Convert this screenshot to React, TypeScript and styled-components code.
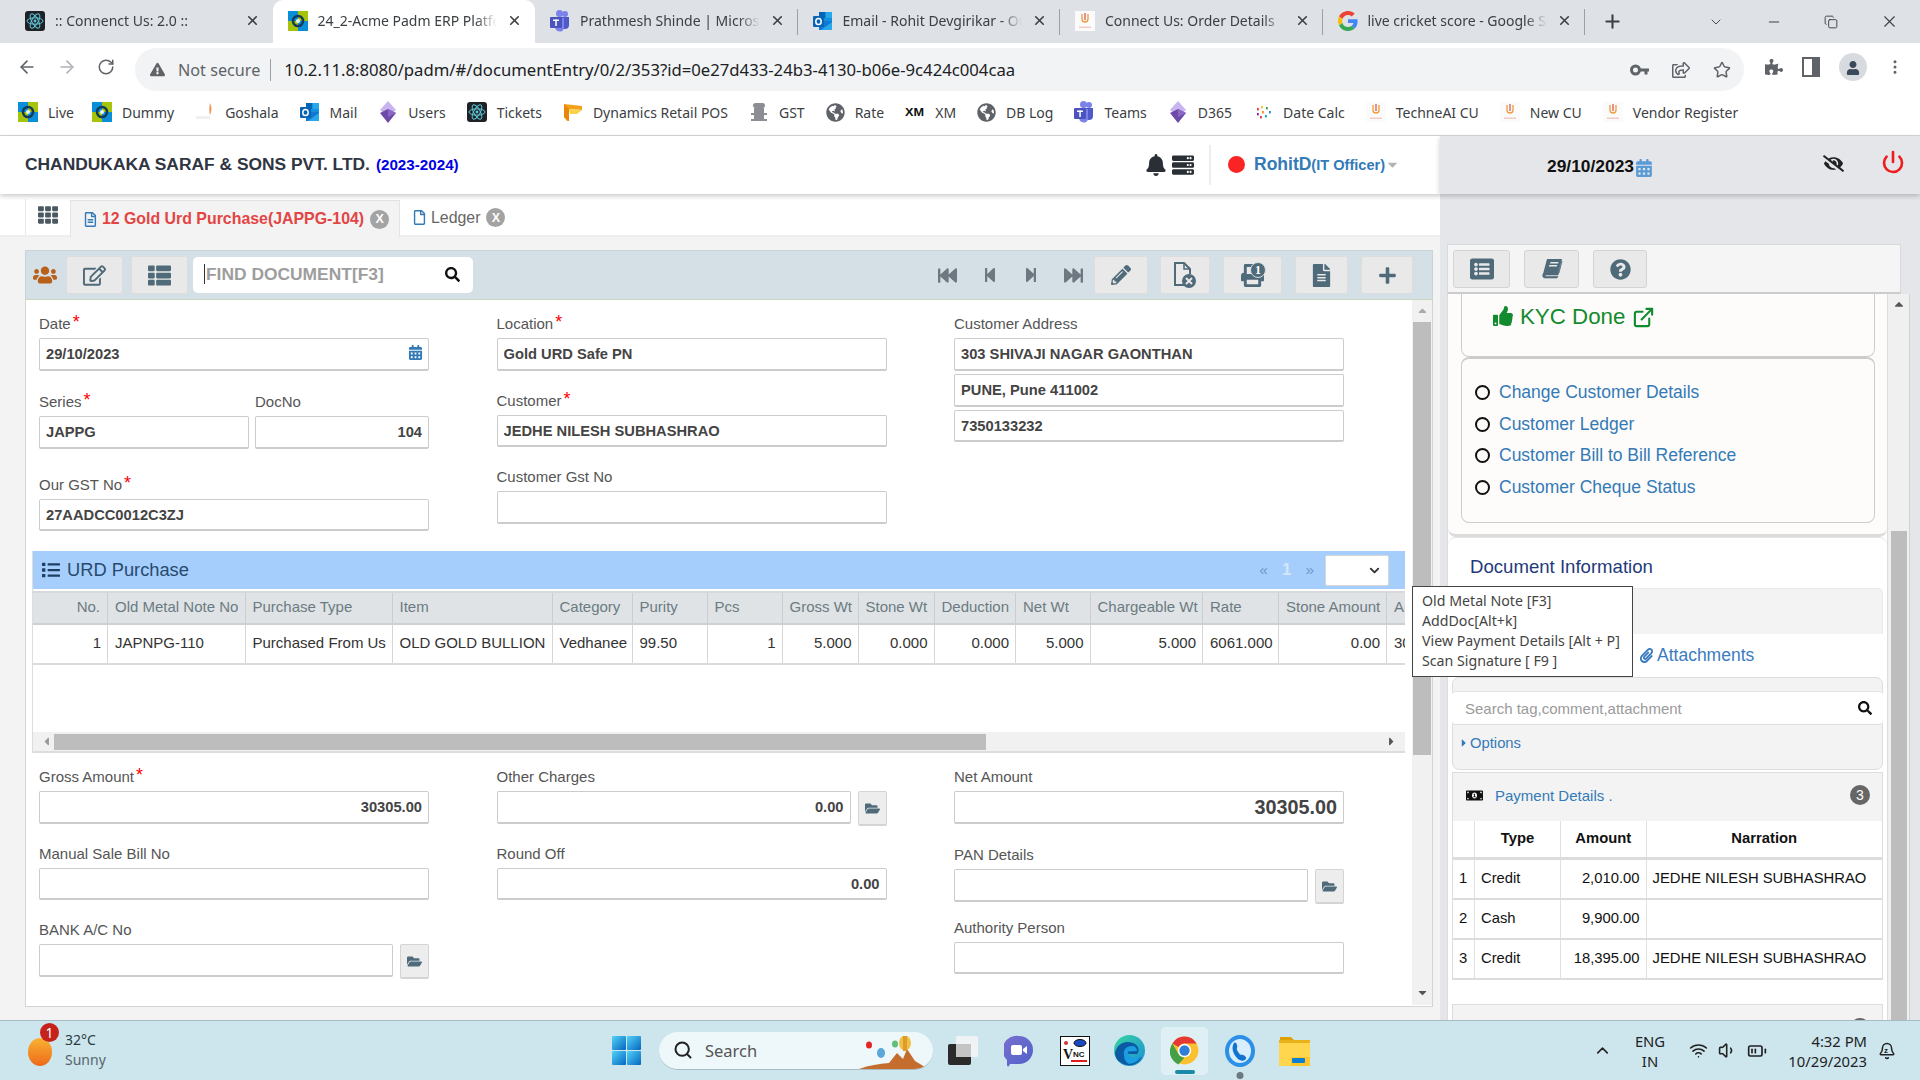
import React from 'react';
import styled, { createGlobalStyle } from 'styled-components';
import { ArrowLeft, ArrowRight, RotateCw, Star, Plus, Minus, X, ChevronDown, ChevronUp, MoreVertical, Copy, Power, ExternalLink, Search as LSearch, Wifi, Volume1, BatteryMedium, Bell } from 'lucide-react';
import { FaUsers, FaRegEdit, FaThList, FaFastBackward, FaStepBackward, FaStepForward, FaFastForward, FaPencilAlt, FaPrint, FaFileAlt, FaPlus, FaSearch, FaBell, FaThumbsUp, FaTh, FaRegFileAlt, FaCalendarAlt, FaFolderOpen, FaPaperclip, FaMoneyBillAlt, FaQuestionCircle, FaListAlt, FaEyeSlash, FaServer, FaCaretRight, FaCaretDown, FaPuzzlePiece, FaUser, FaGlobeAmericas, FaList, FaCaretUp, FaCaretLeft, FaRegFile, FaExclamationTriangle, FaRegShareSquare } from 'react-icons/fa';

const Global = createGlobalStyle`
  html, body { margin: 0; padding: 0; width: 1920px; height: 1080px; overflow: hidden; background: #fff; }
  * { box-sizing: border-box; }
  #root { width: 1920px; height: 1080px; }
`;

const ARIAL = `"Liberation Sans", Arial, sans-serif`;
const UI = `"Noto Sans", "Open Sans", sans-serif`;

const Shell = styled.div`
  position: relative; width: 1920px; height: 1080px; display: flex; flex-direction: column;
  font-family: ${ARIAL}; overflow: hidden;
`;

/* ---------- favicons ---------- */
const AcmeIco = () => (
  <svg width="20" height="20" viewBox="0 0 20 20"><rect width="10" height="10" fill="#0a8ed8"/><rect x="10" width="10" height="10" fill="#a6c40a"/><rect y="10" width="10" height="10" fill="#a6c40a"/><rect x="10" y="10" width="10" height="10" fill="#0a8ed8"/><circle cx="10" cy="10" r="5" fill="none" stroke="#123a5c" strokeWidth="2.6"/><circle cx="10" cy="10" r="2" fill="#e8f0f4"/></svg>
);
const ReactIco = () => (
  <svg width="20" height="20" viewBox="0 0 20 20"><rect width="20" height="20" rx="3" fill="#1e2227"/><g fill="none" stroke="#61c7d8" strokeWidth="1"><ellipse cx="10" cy="10" rx="8" ry="3.2"/><ellipse cx="10" cy="10" rx="8" ry="3.2" transform="rotate(60 10 10)"/><ellipse cx="10" cy="10" rx="8" ry="3.2" transform="rotate(120 10 10)"/></g><circle cx="10" cy="10" r="1.4" fill="#61c7d8"/></svg>
);
const TeamsIco = () => (
  <svg width="20" height="22" viewBox="0 0 20 22"><circle cx="15" cy="4" r="3" fill="#7b83eb"/><circle cx="9.5" cy="3.5" r="3.5" fill="#7b83eb"/><path d="M11 7h8v8a4 4 0 0 1-8 0z" fill="#5059c9"/><path d="M5 8h9v10a4 4 0 0 1-4.500 3.500A5 5 0 0 1 5 17z" fill="#7b83eb"/><rect y="7" width="12" height="11" rx="1" fill="#4b53bc"/><rect x="3" y="9.500" width="6" height="1.500" fill="#fff"/><rect x="5.300" y="9.500" width="1.500" height="6.500" fill="#fff"/></svg>
);
const OutlookIco = () => (
  <svg width="20" height="20" viewBox="0 0 20 20"><rect x="6" y="1" width="13" height="18" rx="1" fill="#1490df"/><rect x="6" y="1" width="6.500" height="6" fill="#0364b8"/><rect x="12.500" y="1" width="6.500" height="6" fill="#28a8ea"/><path d="M6 10l13 0v9H6z" fill="#0f78d4"/><path d="M8 19l11-8v8z" fill="#28a8ea"/><rect y="5" width="11" height="11" rx="1" fill="#0a64b4"/><ellipse cx="5.500" cy="10.500" rx="2.700" ry="3.100" fill="none" stroke="#fff" strokeWidth="1.500"/></svg>
);
const ConnectIco = () => (
  <svg width="20" height="20" viewBox="0 0 20 20"><rect width="20" height="20" fill="#fbfbfb"/><path d="M7 3v5a3 3 0 0 0 6 0V3" fill="none" stroke="#ef9a3c" strokeWidth="1.300"/><path d="M10 2v7" stroke="#e2574c" strokeWidth="1.300"/><rect x="4" y="15.500" width="12" height="1.500" fill="#f4cbc3"/></svg>
);
const GoogleIco = () => (
  <svg width="20" height="20" viewBox="0 0 48 48"><path fill="#EA4335" d="M24 9.500c3.540 0 6.710 1.220 9.210 3.600l6.850-6.850C35.900 2.380 30.470 0 24 0 14.620 0 6.510 5.380 2.560 13.220l7.980 6.190C12.430 13.720 17.740 9.500 24 9.500z"/><path fill="#4285F4" d="M46.980 24.550c0-1.570-.15-3.090-.38-4.550H24v9.020h12.940c-.58 2.960-2.260 5.480-4.780 7.180l7.730 6c4.510-4.180 7.090-10.360 7.090-17.650z"/><path fill="#FBBC05" d="M10.530 28.590c-.48-1.450-.76-2.990-.76-4.590s.27-3.140.76-4.590l-7.980-6.190C.92 16.460 0 20.120 0 24c0 3.880.92 7.540 2.560 10.780l7.970-6.190z"/><path fill="#34A853" d="M24 48c6.480 0 11.930-2.130 15.890-5.810l-7.730-6c-2.150 1.450-4.920 2.300-8.160 2.300-6.260 0-11.570-4.220-13.470-9.910l-7.980 6.190C6.510 42.620 14.620 48 24 48z"/></svg>
);
const GoshalaIco = () => (
  <svg width="20" height="20" viewBox="0 0 20 20"><path d="M15 1c2 4 2 8 0 12-1-3-1-8 0-12z" fill="#ef9a5c"/><rect x="1" y="14" width="14" height="3" fill="#f0f0f0"/></svg>
);
const DiamondIco = () => (
  <svg width="20" height="22" viewBox="0 0 20 22"><path d="M10 0l8 9-8 6-8-6z" fill="#c8b4ee"/><path d="M2 12l8-4 8 4-8 10z" fill="#6d4aa8"/><path d="M10 8l8 4-8 4z" fill="#8b67c6"/></svg>
);
const DynamicsIco = () => (
  <svg width="20" height="20" viewBox="0 0 20 20"><path d="M1 2l18 2v4L6 7v12H4L1 15z" fill="#f3a11c"/><path d="M6 7l13 1-5 4H7z" fill="#f9d24a"/><path d="M1 2l5 5v12l-5-4z" fill="#e8850a"/></svg>
);
const EmblemIco = () => (
  <svg width="20" height="20" viewBox="0 0 20 20"><g fill="#8b8f94"><rect x="4" y="1" width="12" height="5" rx="2.500"/><rect x="5" y="6" width="10" height="5"/><rect x="2" y="11" width="16" height="2"/><rect x="5" y="13" width="10" height="4"/><rect x="2" y="17" width="16" height="2"/></g></svg>
);
const XmIco = () => (
  <svg width="20" height="20" viewBox="0 0 20 20"><text x="0" y="14" fontFamily="Liberation Sans" fontWeight="700" fontSize="11" textLength="19" lengthAdjust="spacingAndGlyphs" fill="#111">XM</text></svg>
);
const DotsIco = () => (
  <svg width="20" height="20" viewBox="0 0 20 20">{[['#e53935', 4, 6], ['#fbc02d', 8, 4], ['#43a047', 13, 5], ['#1e88e5', 16, 9], ['#8e24aa', 4, 11], ['#fb8c00', 9, 9], ['#00acc1', 12, 13], ['#e53935', 7, 14]].map(([c, x, y], i) => <rect key={i} x={x as number} y={y as number} width="1.800" height="2.400" fill={c as string}/>)}</svg>
);
const GlobeIco = () => <FaGlobeAmericas size={19} color="#5f6368" />;
const KeyIco = () => (
  <svg width="19" height="12" viewBox="0 0 19 12"><circle cx="5.500" cy="6" r="4" fill="none" stroke="#5f6368" strokeWidth="3"/><path d="M9 4.500h10v3h-1.500v3h-3v-3H9z" fill="#5f6368"/></svg>
);
const BookIco = () => (
  <svg width="22" height="22" viewBox="0 0 22 22"><path d="M6 1h15l-4 15H2z" fill="#4f6a78"/><path d="M2 16c-1 2 0 4 2 4h12l1-1.500H5c-1 0-1-1.500 0-1.500h12l4-14-3 12z" fill="#4f6a78" stroke="#4f6a78" strokeWidth=".6"/><rect x="8.500" y="4" width="8" height="1.500" fill="#e9e9e9" transform="skewX(-14) translate(2 0)"/><rect x="8" y="7" width="8" height="1.500" fill="#e9e9e9" transform="skewX(-14) translate(2 0)"/></svg>
);
const SideIco = () => (
  <svg width="18" height="20" viewBox="0 0 18 20"><rect x="1" y="1" width="16" height="18" fill="none" stroke="#5f6368" strokeWidth="2"/><rect x="10" y="1" width="7" height="18" fill="#5f6368"/></svg>
);
const FileX = () => (
  <svg width="26" height="28" viewBox="0 0 26 28"><path d="M13 24H3V2h9l6 6v5" fill="none" stroke="#4f6a78" strokeWidth="2"/><path d="M12 2v6h6" fill="none" stroke="#4f6a78" strokeWidth="1.500"/><circle cx="17" cy="20" r="7" fill="#4f6a78"/><path d="M14 17l6 6M20 17l-6 6" stroke="#e9e9e9" strokeWidth="2"/></svg>
);

/* ---------- browser ---------- */
const TabBar = styled.div`
  height: 43px; background: #dee1e6; display: flex; padding-left: 10px; align-items: stretch; flex: none;
`;
const Tab = styled.div<{ $active?: boolean; $sep?: boolean }>`
  width: 262.500px; flex: none; display: flex; align-items: center; padding: 0 13px 2px 15px; gap: 10px;
  font: 14px ${UI}; color: #3c4043; position: relative;
  background: ${p => (p.$active ? '#fff' : 'transparent')};
  border-radius: ${p => (p.$active ? '10px 10px 0 0' : '0')};
  ${p => p.$sep ? `&::after { content: ''; position: absolute; right: 0; top: 9px; bottom: 8px; width: 1px; background: #9aa0a6; }` : ''}
`;
const TabTitle = styled.span`
  flex: 1; overflow: hidden; white-space: nowrap; min-width: 0;
  -webkit-mask-image: linear-gradient(to right, #000 88%, transparent);
  mask-image: linear-gradient(to right, #000 88%, transparent);
`;
const WinControls = styled.div`
  display: flex; align-items: center; color: #3c4043; margin-left: auto; gap: 42px; padding-right: 21px;
`;
const NewTab = styled.div`
  display: flex; align-items: center; margin-left: 17px; color: #3c4043;
`;
const AddressRow = styled.div`
  height: 48px; flex: none; display: flex; align-items: center; padding: 0 0 0 17px; color: #5f6368; background: #fff;
`;
const NavIcons = styled.div`
  display: flex; gap: 20px; align-items: center; width: 118px;
`;
const Omni = styled.div`
  width: 1609px; height: 43px; margin-top: 5px; flex: none; background: #f1f3f4; border-radius: 22px; display: flex; align-items: center;
  padding: 0 13px 0 15px; font: 15.500px ${UI}; color: #5f6368;
`;
const NotSecure = styled.span`
  margin-left: 13px; padding-right: 10px; border-right: 1px solid #9aa0a6; line-height: 22px; font-size: 16.200px;
`;
const Url = styled.span`
  margin-left: 13px; color: #202124; font-size: 16.700px; white-space: nowrap; flex: 1;
`;
const OmniIcons = styled.div`
  display: flex; align-items: center; gap: 23px;
`;
const ExtIcons = styled.div`
  display: flex; align-items: center; margin-left: 21px; gap: 19px;
`;
const Avatar = styled.div`
  width: 28px; height: 28px; border-radius: 50%; background: #d7dbe0; display: flex; align-items: flex-end; justify-content: center; padding-bottom: 6px;
`;
const BookBar = styled.div`
  height: 45px; flex: none; border-bottom: 1px solid #d6d7d9; display: flex; align-items: center; padding: 0 0 2px 18px; gap: 21px;
  background: #fff; font: 14px ${UI}; color: #3c4043;
`;
const Book = styled.div`
  display: flex; align-items: center; gap: 10px; white-space: nowrap;
  &:first-child { margin-right: -3px; }
`;

/* ---------- app layout ---------- */
const AppArea = styled.div`
  flex: 1; min-height: 0; display: grid; grid-template-columns: 1440px 480px;
`;
const LeftCol = styled.div`
  display: flex; flex-direction: column; min-height: 0;
`;
const TopBar = styled.div`
  height: 58px; flex: none; background: #fff; display: flex; align-items: center; padding: 0 0 1px 25px; box-shadow: 0 2px 5px rgba(0,0,0,.22); position: relative; z-index: 2;
`;
const Company = styled.div`
  font: bold 17.400px ${ARIAL}; color: #2f3542; white-space: nowrap; flex: 1;
`;
const Fy = styled.span`
  font-size: 15.200px; color: #0000e6; margin-left: 6px;
`;
const TopIcons = styled.div`
  display: flex; align-items: center; gap: 5px; color: #2a2f36; padding-right: 15px; height: 40px; border-right: 2px solid #eceeef;
`;
const UserBox = styled.div`
  display: flex; align-items: center; padding-left: 17px; width: 229px; white-space: nowrap; color: #337ab7; font: bold 17.500px ${ARIAL};
`;
const RedDot = styled.span`
  width: 17px; height: 17px; border-radius: 50%; background: #fb2424; margin-right: 9px;
`;
const Role = styled.span`
  font-size: 14.600px;
`;
const TabStrip = styled.div`
  height: 43px; flex: none; background: #fff; border-bottom: 2px solid #eee; display: flex; align-items: flex-end; padding-left: 25px;
`;
const GridCell = styled.div`
  width: 45px; height: 36px; border-left: 1px solid #e8e8e8; display: flex; justify-content: center; padding-top: 6px; color: #4b5a62;
`;
const DocTab = styled.div<{ $active?: boolean }>`
  ${p => (p.$active ? 'width: 330px; flex: none;' : '')}
  height: ${p => (p.$active ? '37px' : '35px')}; display: flex; align-items: center; gap: 4px;
  padding: 0 ${p => (p.$active ? '10px' : '0')} 0 ${p => (p.$active ? '12px' : '12px')}; margin-bottom: ${p => (p.$active ? '-2px' : '0')};
  background: ${p => (p.$active ? '#f3f3f3' : 'transparent')};
  border: ${p => (p.$active ? '1px solid #e4e4e4' : 'none')}; border-bottom: none;
  font: ${p => (p.$active ? 'bold' : 'normal')} 15.900px ${ARIAL};
  color: ${p => (p.$active ? '#e34545' : '#666')}; white-space: nowrap;
  svg { color: #337ab7; }
`;
const TabClose = styled.span`
  width: 19px; height: 19px; border-radius: 50%; background: #a3a3a3; color: #fff; display: inline-flex; align-items: center; justify-content: center;
  font: bold 12.500px ${ARIAL}; margin-left: 2px;
`;
const Work = styled.div`
  flex: 1; min-height: 0; background: #f3f3f3; padding: 13px 7px 0 25px;
`;
const ToolBar = styled.div`
  height: 50px; background: #d5e0e6; border: 1px solid #c6d3d9; border-bottom-color: #ccd6c0; display: flex; align-items: center; padding: 0 19px 0 7px;
  color: #4f6a78;
`;
const ToolBtn = styled.div<{ $w: number; $ml?: number }>`
  width: ${p => p.$w}px; height: 38px; flex: none; margin-left: ${p => p.$ml ?? 0}px; background: #e9e9e9; border: 1px solid #ddd; border-radius: 3px;
  display: flex; align-items: center; justify-content: center; color: #4f6a78; position: relative;
`;
const FindBox = styled.div`
  width: 280px; height: 36px; margin-left: 5px; background: #fff; border-radius: 5px; display: flex; align-items: center; justify-content: space-between;
  padding: 0 13px 2px 11px; font: bold 17.400px ${ARIAL}; color: #9d9d9d; white-space: nowrap;
  svg { color: #111; }
`;
const Caret = styled.span`
  display: inline-block; vertical-align: middle; width: 1px; height: 20px; background: #333; margin: -2px 1px 0 0;
`;
const Pager = styled.div`
  margin-left: auto; display: flex; align-items: center; gap: 25px; color: #6d7880; margin-right: 11px;
`;
const PrintBadge = styled.span`
  position: absolute; left: 26px; top: 5px; width: 16px; height: 16px; border-radius: 50%; background: #4f6a78; border: 1px solid #d5e0e6; color: #fff;
  font: bold 12px "Liberation Serif", serif; display: flex; align-items: center; justify-content: center;
`;
const FormFrame = styled.div`
  height: 707px; background: #fff; border: 1px solid #d4d4d4; border-top: none; display: flex;
`;
const FormScroll = styled.div`
  flex: 1; min-width: 0; overflow: hidden; margin-bottom: 4px;
`;
const VTrack = styled.div`
  width: 20px; flex: none; background: #f1f1f1; display: flex; flex-direction: column; align-items: center; justify-content: space-between; color: #7f7f7f; position: relative; padding: 4px 0 6px;
  margin-bottom: 1px;
`;
const VThumb = styled.div<{ $top: number; $h: number }>`
  position: absolute; left: 1px; right: 1px; top: ${p => p.$top}px; height: ${p => p.$h}px; background: #bdbdbd;
`;
const FormGrid = styled.div<{ $h: number }>`
  display: grid; grid-template-columns: 390px 390px 390px; column-gap: 67.500px; padding: 14px 0 0 13px; height: ${p => p.$h}px;
`;
const FormCol = styled.div`
  display: flex; flex-direction: column; align-items: stretch;
`;
const Label = styled.div<{ $mt?: number }>`
  height: 20px; line-height: 20px; margin: ${p => p.$mt ?? 0}px 0 4px; font-size: 15px; color: #555; white-space: nowrap; display: flex; flex: none;
`;
const Req = styled.span`
  color: #f00; font-size: 18px; line-height: 16px; margin-left: 2px;
`;
const Input = styled.input.attrs({ readOnly: true })<{ $right?: boolean; $big?: boolean; $h?: number }>`
  width: 100%; min-width: 0; height: ${p => p.$h ?? 33}px; flex: none; border: 1px solid #ccc; border-bottom-width: 2px; border-radius: 2px; background: #fff; padding: 0 6px;
  font: bold ${p => (p.$big ? '19.800px' : '14.700px')} ${ARIAL}; color: #444; text-align: ${p => (p.$right ? 'right' : 'left')}; outline: none; display: block;
`;
const InputIcon = styled.div`
  position: relative; display: flex;
  svg { position: absolute; right: 6px; top: 7px; color: #337ab7; }
`;
const Row = styled.div<{ $gap?: number }>`
  display: flex; gap: ${p => p.$gap ?? 7}px; align-items: flex-start; flex: none;
  > input { flex: 1 1 0; }
`;
const SmallField = styled.div<{ $w: number }>`
  width: ${p => p.$w}px; flex: none;
`;
const FolderBtn = styled.div`
  width: 29px; height: 35px; flex: none; background: #ededed; border: 1px solid #d4d4d4; border-bottom-width: 2px; border-radius: 2px; display: flex; align-items: center; justify-content: center; color: #4f6a78;
`;
const Stack = styled.div<{ $gap: number }>`
  display: flex; flex-direction: column; gap: ${p => p.$gap}px;
`;

/* ---------- grid ---------- */
const GridBlock = styled.div`
  margin-left: 6px; width: 1373px; height: 202px; border-left: 1px solid #ddd; border-bottom: 2px solid #ddd; display: flex; flex-direction: column; overflow: hidden;
`;
const SectionBar = styled.div`
  height: 38px; flex: none; background: #a6cefc; display: flex; align-items: center; padding-left: 10px; gap: 7px; font-size: 18.300px; color: #264a6e; margin-left: -1px;
`;
const SectionPager = styled.div`
  margin-left: auto; display: flex; align-items: center; gap: 14px; font-size: 15.500px; color: #6f97c8; padding-right: 16px;
`;
const PageNo = styled.span`
  color: #d5e6fa; font-size: 17px; font-weight: 700;
`;
const MiniSelect = styled.div`
  width: 64px; height: 31px; margin-left: -3px; background: #fff; border: 1px solid #d8d8d8; border-radius: 2px; display: flex; align-items: center; justify-content: flex-end; padding-right: 6px; color: #333;
`;
const COLS = '75px 137.500px 147px 160px 80px 75px 75px 76px 76px 81.500px 74.500px 112.500px 76px 108px 60px';
const HeadRow = styled.div`
  display: grid; grid-template-columns: ${COLS}; height: 34px; margin-top: 2px; flex: none; background: #dfe3e5; border-top: 2px solid #d8d8d8; border-bottom: 2px solid #ccd0d2;
`;
const HeadCell = styled.div<{ $right?: boolean }>`
  padding: 0 7px; border-right: 1px solid #c8cdd0; font-size: 15px; line-height: 28px; color: #6b7b82; white-space: nowrap; overflow: hidden; text-align: ${p => (p.$right ? 'right' : 'left')};
`;
const BodyRow = styled.div`
  display: grid; grid-template-columns: ${COLS}; height: 40px; flex: none; border-bottom: 2px solid #d9dcdd;
`;
const BodyCell = styled.div<{ $right?: boolean }>`
  padding: 0 6px 0 7px; border-right: 1px solid #d6d6d6; font-size: 15px; line-height: 35px; color: #333; white-space: nowrap; overflow: hidden; text-align: ${p => (p.$right ? 'right' : 'left')};
`;
const HScroll = styled.div`
  margin-top: auto; height: 19px; flex: none; background: #f1f1f1; display: flex; align-items: center; color: #555; justify-content: space-between; padding: 0 7px; position: relative;
`;
const HThumb = styled.div`
  position: absolute; left: 21px; top: 2px; bottom: 1px; width: 932px; background: #bdbdbd;
`;

/* ---------- right column ---------- */
const RightCol = styled.div`
  background: #e4e6e9; display: flex; flex-direction: column; min-height: 0;
`;
const DateBar = styled.div`
  height: 58px; flex: none; background: #e4e6e9; display: flex; align-items: center; padding: 3px 0 0 107px; box-shadow: 0 2px 5px rgba(0,0,0,.22); position: relative; z-index: 2;
  font: bold 17.400px ${ARIAL}; color: #111;
`;
const DateCal = styled.span`
  color: #5b9bd5; display: flex; margin-left: 1px; margin-top: 3px;
`;
const EyeIcon = styled.span`
  margin: -7px 0 0 170px; display: flex; color: #222;
`;
const PowerIcon = styled.span`
  margin: -9px 0 0 37px; display: flex; color: #ee1c1c;
`;
const SideWrap = styled.div`
  flex: 1; min-height: 0; padding: 50px 10px 0 7px; display: flex; flex-direction: column;
`;
const SideTools = styled.div`
  width: 454px; height: 50px; flex: none; background: #f5f5f5; border: 1px solid #d5dadd; border-bottom: 2px solid #ccc; display: flex; align-items: flex-start; padding: 5px 0 0 5px; gap: 14px;
`;
const SideBtn = styled.div<{ $w: number }>`
  width: ${p => p.$w}px; height: 38px; background: #e9e9e9; border: 1px solid #d4d4d4; border-radius: 3px; display: flex; align-items: center; justify-content: center; color: #4f6a78;
`;
const SideBody = styled.div`
  flex: 1; min-height: 0; display: flex; overflow: hidden; border-right: 1px solid #cfd3d6;
`;
const SideScroll = styled.div`
  width: 441px; flex: none; background: #fff; overflow: hidden; border-left: 1px solid #ddd; border-right: 1px solid #ddd;
`;
const SideTrack = styled.div`
  flex: 1; background: #f0f0f0; position: relative; display: flex; justify-content: center; padding-top: 3px; color: #555;
`;
const SideThumb = styled.div`
  position: absolute; left: 3px; right: 2px; top: 237px; bottom: 0; background: #bdbdbd;
`;
const OuterTop = styled.div`
  height: 243px; background: #fdfcfa; padding: 0 12px 0 13px; border-bottom: 3px solid #dcdcdc; border-radius: 0 0 8px 8px;
`;
const KycCard = styled.div`
  height: 63px; border: 1px solid #ccc; border-top: none; border-radius: 0 0 8px 8px; padding: 9px 0 0 31px; display: flex; align-items: flex-start; gap: 7px;
  font-size: 22.300px; line-height: 28px; color: #128a2e;
  svg { margin-top: 3px; }
`;
const LinkCard = styled.div`
  height: 166px; border: 1px solid #ccc; border-top-width: 2px; border-radius: 8px; padding-top: 18px; padding-left: 13px;
`;
const LinkRow = styled.div`
  height: 31.500px; display: flex; align-items: center; gap: 9px; font-size: 17.500px; color: #337ab7; white-space: nowrap;
`;
const Radio = styled.span`
  width: 15px; height: 15px; border: 2px solid #111; border-radius: 50%; flex: none;
`;
const OuterDoc = styled.div`
  padding: 0 4px; border-top: 1px solid #e5e5e5; border-radius: 8px 8px 0 0;
`;
const DocTitle = styled.div`
  height: 50px; line-height: 58px; padding-left: 18px; font-size: 18.600px; color: #1f3a7a;
`;
const GreyBlank = styled.div`
  height: 46px; background: #f3f3f3; border: 1px solid #eaeaea; border-bottom: none; border-radius: 5px 5px 0 0;
`;
const AttachRow = styled.div`
  height: 43px; display: flex; align-items: center; padding-left: 187px; gap: 3px; font-size: 17.500px; color: #3b7bbf;
`;
const SearchPanel = styled.div`
  height: 93px; background: #f3f3f3; border: 1px solid #ddd; border-radius: 7px; padding-top: 13px;
`;
const SearchInput = styled.div`
  height: 34px; background: #fff; border-bottom: 1px solid #ddd; border-top: 1px solid #e4e4e4; border-radius: 4px; display: flex; align-items: center; justify-content: space-between; padding: 0 11px 0 13px;
  font-size: 15px; color: #9a9a9a; margin: 0 -1px; svg { color: #111; }
`;
const OptionsRow = styled.div`
  display: flex; align-items: center; gap: 0; padding: 10px 0 0 5px; font-size: 14.800px; color: #337ab7;
`;
const PayPanel = styled.div`
  margin-top: 2px; border: 1px solid #ddd; background: #fff;
`;
const PayHead = styled.div`
  height: 47.500px; background: #f3f3f3; display: flex; align-items: center; padding: 0 12px 3px 13px; font-size: 15px; color: #337ab7; gap: 12px;
  svg { color: #111; }
`;
const Count = styled.span`
  margin-left: auto; width: 20px; height: 20px; border-radius: 50%; background: #666; color: #fff; font-size: 14px; display: flex; align-items: center; justify-content: center;
`;
const PAY = '22px 86px 85.500px 1fr';
const PayRow = styled.div<{ $head?: boolean }>`
  display: grid; grid-template-columns: ${PAY}; height: ${p => (p.$head ? '39.500px' : '40px')}; border-bottom: ${p => (p.$head ? '3px' : '2px')} solid #dcdcdc;
  &:last-child { border-bottom-width: 1px; height: 39px; }
`;
const PayCell = styled.div<{ $align?: string; $head?: boolean }>`
  padding: 0 6px; border-right: 1px solid #e0e0e0; font: ${p => (p.$head ? 'bold' : 'normal')} 14.800px/${p => (p.$head ? '35px' : '37px')} ${ARIAL}; color: #111; white-space: nowrap; overflow: hidden; text-align: ${p => p.$align ?? 'left'};
  &:last-child { border-right: none; }
`;
const NextPanel = styled.div`
  margin-top: 24px; height: 40px; background: #f3f3f3; border: 1px solid #ddd; padding: 13px 12px 0 13px; display: flex; justify-content: space-between; font-size: 15px; color: #337ab7;
`;

/* ---------- tooltip ---------- */
const Tip = styled.div`
  position: absolute; left: 1412px; top: 586px; width: 221px; height: 91px; background: #fff; border: 1px solid #444; padding: 4px 9px; z-index: 5;
  font: 14.200px/20px ${UI}; color: #444; white-space: nowrap;
`;

/* ---------- taskbar ---------- */
const TaskBar = styled.div`
  height: 60px; flex: none; background: #cde6ee; border-top: 1px solid #a8bcc4; display: flex; align-items: center; position: relative; z-index: 3;
`;
const Weather = styled.div`
  width: 612px; flex: none; display: flex; align-items: center; padding-left: 28px; position: relative;
`;
const Sun = styled.div`
  width: 24px; height: 28px; border-radius: 50%; background: linear-gradient(#f9b233, #ee6a1a); margin-top: 2px;
`;
const WBadge = styled.span`
  position: absolute; left: 40px; top: -9px; width: 19px; height: 19px; border-radius: 50%; background: #c4221b; color: #fff; font: 14px ${UI}; display: flex; align-items: center; justify-content: center;
`;
const WText = styled.div`
  margin: -2px 0 0 13px; font: 14px/20px ${UI}; color: #2c3a40;
`;
const WSub = styled.div`
  color: #56656b;
`;
const Pill = styled.div`
  width: 274px; height: 38px; margin-left: 18px; flex: none; background: #eef7fa; border-radius: 19px; border-bottom: 1px solid #a9bcc4; display: flex; align-items: center; padding-left: 14px; gap: 12px;
  font: 16.500px ${UI}; color: #555; overflow: hidden; position: relative;
`;
const PillArt = styled.span`
  position: absolute; right: 4px; top: 4px; display: flex;
`;
const Slot = styled.div<{ $ml: number; $active?: boolean; $mark?: string }>`
  margin-left: ${p => p.$ml}px; flex: none; display: flex; align-items: center; justify-content: center; position: relative;
  ${p => p.$active ? `width: 47px; height: 48px; background: #dff0f5; border-radius: 5px;` : ''}
  ${p => p.$mark ? `&::after { content: ''; position: absolute; bottom: ${p.$active ? '1px' : '-12px'}; left: 50%; transform: translateX(-50%); width: ${p.$active ? '20px' : '7px'}; height: ${p.$active ? '4px' : '7px'}; border-radius: 4px; background: ${p.$mark}; }` : ''}
`;
const Tray = styled.div`
  margin-left: auto; display: flex; align-items: center; color: #222; font: 14.800px/20px ${UI}; padding-right: 24px;
`;
const Lang = styled.div`
  width: 40px; text-align: center; margin-left: 18px;
`;
const TrayIcons = styled.div`
  display: flex; align-items: center; gap: 10px; margin-left: 19px;
`;
const Clock = styled.div`
  text-align: right; margin-left: 10px; width: 90px;
`;
const BellSlot = styled.div`
  margin-left: 11px; display: flex; position: relative;
`;
const BellZ = styled.span`
  position: absolute; left: 6px; top: 4px; font: bold 8px ${ARIAL}; color: #222;
`;

/* ---------- taskbar art ---------- */
const WinLogo = () => (
  <svg width="29" height="29" viewBox="0 0 29 29"><defs><linearGradient id="w" x1="0" y1="0" x2="1" y2="1"><stop offset="0" stopColor="#52d2f8"/><stop offset="1" stopColor="#0566c0"/></linearGradient></defs><rect width="14" height="14" rx="1" fill="url(#w)"/><rect x="15" width="14" height="14" rx="1" fill="url(#w)"/><rect y="15" width="14" height="14" rx="1" fill="url(#w)"/><rect x="15" y="15" width="14" height="14" rx="1" fill="url(#w)"/></svg>
);
const TaskView = () => (
  <svg width="30" height="30" viewBox="0 0 30 30"><rect x="0" y="8" width="23" height="21" rx="2" fill="#2a2a2a"/><rect x="8" y="0" width="22" height="21" rx="2" fill="#f1f3f4" opacity=".95"/><rect x="8" y="8" width="15" height="13" fill="#c4c4c4"/></svg>
);
const MeetIco = () => (
  <svg width="30" height="32" viewBox="0 0 30 32"><defs><linearGradient id="m" x1="0" y1="0" x2="1" y2="1"><stop offset="0" stopColor="#7a6fd0"/><stop offset="1" stopColor="#4f62c9"/></linearGradient></defs><path d="M15 1a14 14 0 0 1 0 28H6l-1 2c-1 1-2 0-2-1v-5A14 14 0 0 1 15 1z" fill="url(#m)"/><rect x="7" y="10" width="11" height="10" rx="2" fill="#fff"/><path d="M19 14l4-3v8l-4-3z" fill="#fff"/></svg>
);
const VncIco = () => (
  <svg width="30" height="30" viewBox="0 0 30 30"><rect x=".5" y=".5" width="29" height="29" fill="#fff" stroke="#111"/><ellipse cx="20" cy="7" rx="6" ry="3.500" fill="#1a49c4" stroke="#111"/><text x="3" y="23" fontFamily="Liberation Serif" fontWeight="700" fontSize="14" fill="#111">V</text><text x="13" y="21" fontFamily="Liberation Sans" fontWeight="700" fontSize="8" fill="#111">NC</text><rect x="11" y="24" width="16" height="2" fill="#e21d1d"/><circle cx="6" cy="7" r="2" fill="#c33"/></svg>
);
const EdgeIco = () => (
  <svg width="31" height="31" viewBox="0 0 31 31"><defs><linearGradient id="e1" x1="0" y1="0" x2="1" y2="1"><stop offset="0" stopColor="#38d6a0"/><stop offset="1" stopColor="#1a8fd8"/></linearGradient></defs><circle cx="15.500" cy="15.500" r="15.500" fill="url(#e1)"/><path d="M1 18C3 8 12 5 19 8c6 2.500 7 8 4 11h-9c0 5 6 7 14 3-3 6-9 9-15 8C6 29 1 24 1 18z" fill="#0c59a4"/><path d="M10 20c-1-5 2-9 8-9 3 0 5 2 5 5l-9 .5c0 5 5 8 13 5-3 5-8 8-13 7-3-2-4-5-4-8.500z" fill="#1b9de2"/></svg>
);
const ChromeIco = () => (
  <svg width="29" height="29" viewBox="0 0 48 48"><circle cx="24" cy="24" r="23" fill="#fbc02d"/><path d="M24 1a23 23 0 0 1 20 11.500H24a11.500 11.500 0 0 0-10 5.800L4 12.500A23 23 0 0 1 24 1z" fill="#e53935"/><path d="M4 12.500l10 17.300a11.500 11.500 0 0 0 10 5.700L14 47A23 23 0 0 1 4 12.500z" fill="#43a047"/><circle cx="24" cy="24" r="11" fill="#fff"/><circle cx="24" cy="24" r="8.500" fill="#2f7ed8"/></svg>
);
const PhoneIco = () => (
  <svg width="30" height="32" viewBox="0 0 30 32"><ellipse cx="15" cy="16" rx="15" ry="16" fill="#2c8fe8"/><ellipse cx="15" cy="16" rx="11" ry="12" fill="#d8eefc"/><path d="M9 8c2-2 4 3 3 5-1 1 2 6 4 7 2-1 6 2 5 4-3 3-6 2-9-1-4-4-6-11-3-15z" fill="#1273d0"/></svg>
);
const FolderIco = () => (
  <svg width="31" height="31" viewBox="0 0 31 31"><path d="M1 2h11l3 3h-14z" fill="#e0a100"/><rect x="0" y="5" width="31" height="26" fill="#ffd64d"/><rect x="0" y="5" width="31" height="3" fill="#e8b21a"/><rect x="12" y="22" width="19" height="9" fill="#ffc72c"/><rect x="13" y="23" width="13" height="5" rx="1" fill="#0d7fd4"/></svg>
);
const Balloons = () => (
  <svg width="70" height="34" viewBox="40 0 70 34"><path d="M40 33c10-4 20-5 30-6l8-10 6 6 4-10 8 12 10 6-6 4H40z" fill="#c46d2d"/><ellipse cx="86" cy="7" rx="6" ry="7.500" fill="#efc044"/><path d="M84 0h4v15h-4z" fill="#e09b2a"/><ellipse cx="62" cy="17" rx="4" ry="5" fill="#5aa7d8"/><ellipse cx="76" cy="8" rx="3" ry="3.500" fill="#5cc07a"/><ellipse cx="50" cy="9" rx="3" ry="3.500" fill="#e32525"/></svg>
);

const tabs: [React.ReactNode, string, boolean?, boolean?][] = [
  [<ReactIco />, ':: Connenct Us: 2.0 ::'],
  [<AcmeIco />, '24_2-Acme Padm ERP Platform', true],
  [<TeamsIco />, 'Prathmesh Shinde | Microsoft Teams', false, true],
  [<OutlookIco />, 'Email - Rohit Devgirikar - Outlook', false, true],
  [<ConnectIco />, 'Connect Us: Order Details', false, true],
  [<GoogleIco />, 'live cricket score - Google Search', false, true],
];
const books: [React.ReactNode, string][] = [
  [<AcmeIco />, 'Live'], [<AcmeIco />, 'Dummy'], [<GoshalaIco />, 'Goshala'], [<OutlookIco />, 'Mail'], [<DiamondIco />, 'Users'], [<ReactIco />, 'Tickets'],
  [<DynamicsIco />, 'Dynamics Retail POS'], [<EmblemIco />, 'GST'], [<GlobeIco />, 'Rate'], [<XmIco />, 'XM'], [<GlobeIco />, 'DB Log'], [<TeamsIco />, 'Teams'],
  [<DiamondIco />, 'D365'], [<DotsIco />, 'Date Calc'], [<ConnectIco />, 'TechneAI CU'], [<ConnectIco />, 'New CU'], [<ConnectIco />, 'Vendor Register'],
];
const headers: [string, boolean?][] = [['No.', true], ['Old Metal Note No'], ['Purchase Type'], ['Item'], ['Category'], ['Purity'], ['Pcs'], ['Gross Wt'], ['Stone Wt'], ['Deduction'], ['Net Wt'], ['Chargeable Wt'], ['Rate'], ['Stone Amount'], ['Amount']];
const cells: [string, boolean?][] = [['1', true], ['JAPNPG-110'], ['Purchased From Us'], ['OLD GOLD BULLION'], ['Vedhanee'], ['99.50'], ['1', true], ['5.000', true], ['0.000', true], ['0.000', true], ['5.000', true], ['5.000', true], ['6061.000'], ['0.00', true], ['30305.00']];
const links = ['Change Customer Details', 'Customer Ledger', 'Customer Bill to Bill Reference', 'Customer Cheque Status'];
const pays = [['1', 'Credit', '2,010.00', 'JEDHE NILESH SUBHASHRAO'], ['2', 'Cash', '9,900.00', ''], ['3', 'Credit', '18,395.00', 'JEDHE NILESH SUBHASHRAO']];

export default function App() {
  return (
    <Shell>
      <Global />
      <TabBar>
        {tabs.map(([ico, t, active, sep], i) => (
          <Tab key={i} $active={active} $sep={sep}>
            {ico}<TabTitle>{t}</TabTitle><X size={15} strokeWidth={2.6} />
          </Tab>
        ))}
        <NewTab><Plus size={21} strokeWidth={2.4} /></NewTab>
        <WinControls>
          <ChevronDown size={16} strokeWidth={1.4} />
          <Minus size={16} strokeWidth={1.6} />
          <Copy size={14} strokeWidth={1.6} />
          <X size={19} strokeWidth={1.4} />
        </WinControls>
      </TabBar>
      <AddressRow>
        <NavIcons>
          <ArrowLeft size={20} />
          <ArrowRight size={20} color="#b0b3b7" />
          <RotateCw size={18} />
        </NavIcons>
        <Omni>
          <FaExclamationTriangle size={15} color="#5f6368" />
          <NotSecure>Not secure</NotSecure>
          <Url>10.2.11.8:8080/padm/#/documentEntry/0/2/353?id=0e27d433-24b3-4130-b06e-9c424c004caa</Url>
          <OmniIcons>
            <KeyIco />
            <FaRegShareSquare size={18} />
            <Star size={18} />
          </OmniIcons>
        </Omni>
        <ExtIcons>
          <FaPuzzlePiece size={18} />
          <SideIco />
          <Avatar><FaUser size={14} color="#3b4a5a" /></Avatar>
          <MoreVertical size={18} />
        </ExtIcons>
      </AddressRow>
      <BookBar>
        {books.map(([ico, t], i) => <Book key={i}>{ico}{t}</Book>)}
      </BookBar>

      <AppArea>
        <LeftCol>
          <TopBar>
            <Company>CHANDUKAKA SARAF &amp; SONS PVT. LTD.<Fy>(2023-2024)</Fy></Company>
            <TopIcons><FaBell size={22} /><FaServer size={22} /></TopIcons>
            <UserBox><RedDot />RohitD<Role>(IT Officer)</Role><FaCaretDown size={15} color="#b4b4b4" /></UserBox>
          </TopBar>
          <TabStrip>
            <GridCell><FaTh size={20} /></GridCell>
            <DocTab $active><FaRegFileAlt size={15} />12 Gold Urd Purchase(JAPPG-104)<TabClose>X</TabClose></DocTab>
            <DocTab><FaRegFile size={15} />Ledger<TabClose>X</TabClose></DocTab>
          </TabStrip>
          <Work>
            <ToolBar>
              <FaUsers size={24} color="#b9601a" />
              <ToolBtn $w={57} $ml={9}><FaRegEdit size={23} /></ToolBtn>
              <ToolBtn $w={57} $ml={8}><FaThList size={23} /></ToolBtn>
              <FindBox><span><Caret />FIND DOCUMENT[F3]</span><FaSearch size={15} /></FindBox>
              <Pager>
                <FaFastBackward size={19} />
                <FaStepBackward size={16} />
                <FaStepForward size={16} />
                <FaFastForward size={19} />
              </Pager>
              <ToolBtn $w={54}><FaPencilAlt size={20} /></ToolBtn>
              <ToolBtn $w={50} $ml={12}><FileX /></ToolBtn>
              <ToolBtn $w={59} $ml={13}><FaPrint size={23} /><PrintBadge>1</PrintBadge></ToolBtn>
              <ToolBtn $w={53} $ml={13}><FaFileAlt size={23} /></ToolBtn>
              <ToolBtn $w={52} $ml={13}><FaPlus size={19} /></ToolBtn>
            </ToolBar>
            <FormFrame>
              <FormScroll>
                <FormGrid $h={251}>
                  <FormCol>
                    <Label>Date<Req>*</Req></Label>
                    <InputIcon><Input value="29/10/2023" /><FaCalendarAlt size={15} /></InputIcon>
                    <Row $gap={6}>
                      <SmallField $w={210}>
                        <Label $mt={21}>Series<Req>*</Req></Label>
                        <Input value="JAPPG" />
                      </SmallField>
                      <SmallField $w={174}>
                        <Label $mt={21}>DocNo</Label>
                        <Input value="104" $right />
                      </SmallField>
                    </Row>
                    <Label $mt={26}>Our GST No<Req>*</Req></Label>
                    <Input value="27AADCC0012C3ZJ" $h={32} />
                  </FormCol>
                  <FormCol>
                    <Label>Location<Req>*</Req></Label>
                    <Input value="Gold URD Safe PN" />
                    <Label $mt={20}>Customer<Req>*</Req></Label>
                    <Input value="JEDHE NILESH SUBHASHRAO" $h={32} />
                    <Label $mt={20}>Customer Gst No</Label>
                    <Input value="" />
                  </FormCol>
                  <FormCol>
                    <Label>Customer Address</Label>
                    <Stack $gap={3}>
                      <Input value="303 SHIVAJI NAGAR GAONTHAN" />
                      <Input value="PUNE, Pune 411002" />
                      <Input value="7350133232" $h={32} />
                    </Stack>
                  </FormCol>
                </FormGrid>
                <GridBlock>
                  <SectionBar>
                    <FaList size={18} color="#1f3f63" />URD Purchase
                    <SectionPager>«<PageNo>1</PageNo>»<MiniSelect><ChevronDown size={15} strokeWidth={3} /></MiniSelect></SectionPager>
                  </SectionBar>
                  <HeadRow>
                    {headers.map(([h, r], i) => <HeadCell key={i} $right={r}>{h}</HeadCell>)}
                  </HeadRow>
                  <BodyRow>
                    {cells.map(([c, r], i) => <BodyCell key={i} $right={r}>{c}</BodyCell>)}
                  </BodyRow>
                  <HScroll>
                    <FaCaretLeft size={13} color="#999" /><HThumb /><FaCaretRight size={13} />
                  </HScroll>
                </GridBlock>
                <FormGrid $h={260}>
                  <FormCol>
                    <Label>Gross Amount<Req>*</Req></Label>
                    <Input value="30305.00" $right />
                    <Label $mt={20}>Manual Sale Bill No</Label>
                    <Input value="" $h={32} />
                    <Label $mt={20}>BANK A/C No</Label>
                    <Row><Input value="" /><FolderBtn><FaFolderOpen size={15} /></FolderBtn></Row>
                    <Label $mt={20}>IFSC No</Label>
                  </FormCol>
                  <FormCol>
                    <Label>Other Charges</Label>
                    <Row><Input value="0.00" $right /><FolderBtn><FaFolderOpen size={15} /></FolderBtn></Row>
                    <Label $mt={18}>Round Off</Label>
                    <Input value="0.00" $right $h={32} />
                  </FormCol>
                  <FormCol>
                    <Label>Net Amount</Label>
                    <Input value="30305.00" $right $big />
                    <Label $mt={21}>PAN Details</Label>
                    <Row><Input value="" /><FolderBtn><FaFolderOpen size={15} /></FolderBtn></Row>
                    <Label $mt={14}>Authority Person</Label>
                    <Input value="" $h={32} />
                  </FormCol>
                </FormGrid>
              </FormScroll>
              <VTrack>
                <FaCaretUp size={13} color="#aaa" />
                <VThumb $top={22} $h={433} />
                <FaCaretDown size={13} color="#555" />
              </VTrack>
            </FormFrame>
          </Work>
        </LeftCol>

        <RightCol>
          <DateBar>
            29/10/2023<DateCal><FaCalendarAlt size={18} /></DateCal>
            <EyeIcon><FaEyeSlash size={21} /></EyeIcon>
            <PowerIcon><Power size={24} strokeWidth={2.6} /></PowerIcon>
          </DateBar>
          <SideWrap>
            <SideTools>
              <SideBtn $w={57}><FaListAlt size={24} /></SideBtn>
              <SideBtn $w={55}><BookIco /></SideBtn>
              <SideBtn $w={54}><FaQuestionCircle size={21} /></SideBtn>
            </SideTools>
            <SideBody>
              <SideScroll>
                <OuterTop>
                  <KycCard><FaThumbsUp size={20} />KYC Done<ExternalLink size={23} strokeWidth={2.2} /></KycCard>
                  <LinkCard>
                    {links.map(l => <LinkRow key={l}><Radio />{l}</LinkRow>)}
                  </LinkCard>
                </OuterTop>
                <OuterDoc>
                  <DocTitle>Document Information</DocTitle>
                  <GreyBlank />
                  <AttachRow><FaPaperclip size={15} />Attachments</AttachRow>
                  <SearchPanel>
                    <SearchInput>Search tag,comment,attachment<FaSearch size={14} /></SearchInput>
                    <OptionsRow><FaCaretRight size={12} />Options</OptionsRow>
                  </SearchPanel>
                  <PayPanel>
                    <PayHead><FaMoneyBillAlt size={17} />Payment Details .<Count>3</Count></PayHead>
                    <PayRow $head>
                      <PayCell $head />
                      <PayCell $head $align="center">Type</PayCell>
                      <PayCell $head $align="center">Amount</PayCell>
                      <PayCell $head $align="center">Narration</PayCell>
                    </PayRow>
                    {pays.map(r => (
                      <PayRow key={r[0]}>
                        <PayCell>{r[0]}</PayCell>
                        <PayCell>{r[1]}</PayCell>
                        <PayCell $align="right">{r[2]}</PayCell>
                        <PayCell>{r[3]}</PayCell>
                      </PayRow>
                    ))}
                  </PayPanel>
                  <NextPanel><span>Tags</span><Count>0</Count></NextPanel>
                </OuterDoc>
              </SideScroll>
              <SideTrack>
                <FaCaretUp size={14} />
                <SideThumb />
              </SideTrack>
            </SideBody>
          </SideWrap>
        </RightCol>
      </AppArea>

      <TaskBar>
        <Weather>
          <Sun /><WBadge>1</WBadge>
          <WText>32°C<WSub>Sunny</WSub></WText>
        </Weather>
        <WinLogo />
        <Pill><LSearch size={20} strokeWidth={2.4} color="#222" />Search<PillArt><Balloons /></PillArt></Pill>
        <Slot $ml={15}><TaskView /></Slot>
        <Slot $ml={26}><MeetIco /></Slot>
        <Slot $ml={26}><VncIco /></Slot>
        <Slot $ml={24}><EdgeIco /></Slot>
        <Slot $ml={16} $active $mark="#1b8aa6"><ChromeIco /></Slot>
        <Slot $ml={17} $mark="#6b7a80"><PhoneIco /></Slot>
        <Slot $ml={24}><FolderIco /></Slot>
        <Tray>
          <ChevronUp size={19} />
          <Lang>ENG<br />IN</Lang>
          <TrayIcons><Wifi size={19} /><Volume1 size={19} /><BatteryMedium size={20} /></TrayIcons>
          <Clock>4:32 PM<br />10/29/2023</Clock>
          <BellSlot><Bell size={18} /><BellZ>z</BellZ></BellSlot>
        </Tray>
      </TaskBar>

      <Tip>
        Old Metal Note [F3]<br />
        AddDoc[Alt+k]<br />
        View Payment Details [Alt + P]<br />
        Scan Signature [ F9 ]
      </Tip>
    </Shell>
  );
}
